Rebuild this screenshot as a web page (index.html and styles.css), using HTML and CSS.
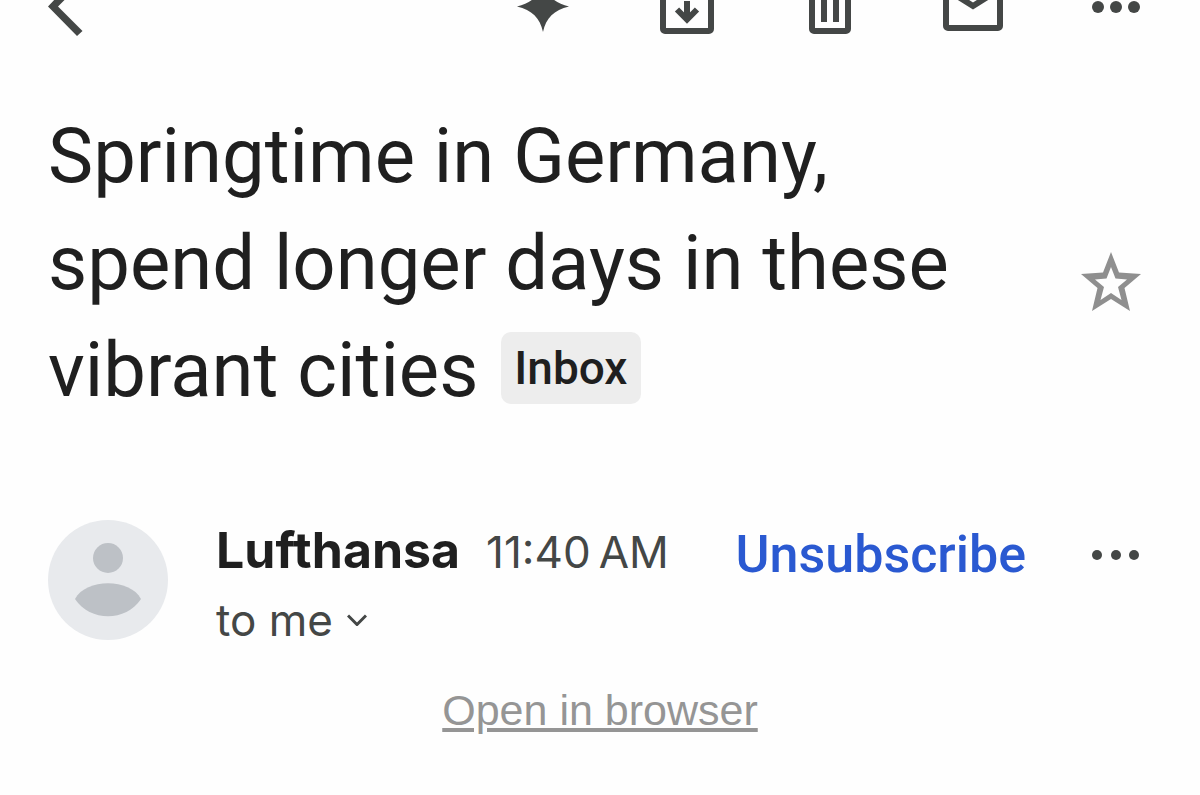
FILE: index.html
```html
<!DOCTYPE html>
<html lang="en">
<head>
  <meta charset="UTF-8">
  <meta name="viewport" content="width=device-width, initial-scale=1">
  <title>Springtime in Germany</title>
  <link rel="stylesheet" href="styles.css">
</head>
<body>

<header class="toolbar">
  <button class="icon-btn back" aria-label="Back">
    <svg viewBox="0 0 60 60"><path d="M28 -3 0 26.500 29 56 34.500 51 10 26.500 34.500 2z"/></svg>
  </button>
  <button class="icon-btn" aria-label="Summarize">
    <svg viewBox="0 0 60 60"><path d="M29 1C32 15 40 23 55 26.500 40 30 32 38 29 52 26 38 18 30 3 26.500 18 23 26 15 29 1z"/></svg>
  </button>
  <button class="icon-btn" aria-label="Archive">
    <svg viewBox="0 0 60 60"><path class="line" d="M6 8 11 3H49L54 8V49a2 2 0 0 1-2 2H8a2 2 0 0 1-2-2zM30 21V38"/><path class="line" d="M20 29.500 30 39.500 40 29.500"/></svg>
  </button>
  <button class="icon-btn" aria-label="Delete">
    <svg viewBox="0 0 60 60"><path class="line" d="M12 9V49a2 2 0 0 0 2 2H46a2 2 0 0 0 2-2V9M24 16V42M36 16V42M7 6H53"/></svg>
  </button>
  <button class="icon-btn" aria-label="Mark unread">
    <svg viewBox="0 0 60 60"><rect class="line" x="3" y="6" width="54" height="42" rx="2"/><path class="line" d="M3 9 30 26 57 9"/></svg>
  </button>
  <button class="icon-btn" aria-label="More options">
    <svg viewBox="0 0 60 60"><circle cx="12" cy="27" r="6"/><circle cx="30" cy="27" r="6"/><circle cx="48" cy="27" r="6"/></svg>
  </button>
</header>

<main>
  <div class="subject">
    <h1>Springtime in Germany, spend longer days in these vibrant cities <span class="label">Inbox</span></h1>
    <button class="icon-btn star" aria-label="Star">
      <svg viewBox="0 0 60 60"><path d="M30 0 38 20.500 60 22 43.500 36 49 59 30 47 11 59 16.500 36 0 22 22 20.500zM30 15 25.500 26.500 14 27.500 23 35 19.500 48 30 41 40.500 48 37 35 46 27.500 34.500 26.500z" fill-rule="evenodd"/></svg>
    </button>
  </div>

  <div class="sender">
    <svg class="avatar" viewBox="0 0 120 120" aria-hidden="true">
      <circle class="avatar-bg" cx="60" cy="60" r="60"/>
      <circle cx="60" cy="38" r="15"/>
      <path d="M27 79C38 58 82 58 93 79 78 102 42 102 27 79z"/>
    </svg>
    <div class="details">
      <div class="from"><strong>Lufthansa</strong> <time>11:40&#8239;AM</time></div>
      <button class="recipients">to me <svg viewBox="0 0 20 12"><path d="M1 1.500 10 10.500 19 1.500"/></svg></button>
    </div>
    <a class="unsubscribe" href="#">Unsubscribe</a>
    <button class="icon-btn" aria-label="Message options">
      <svg viewBox="0 0 60 60"><circle cx="11" cy="30" r="5"/><circle cx="30" cy="30" r="5"/><circle cx="48" cy="30" r="5"/></svg>
    </button>
  </div>

  <p class="browser"><a href="#">Open in browser</a></p>
</main>

</body>
</html>
```
FILE: styles.css
```css
* {
  box-sizing: border-box;
}
body {
  margin: 0;
  background: #fefefe;
  color: #1f1f1f;
  font-family: Roboto, sans-serif;
}
button {
  padding: 0;
  border: none;
  background: none;
  color: inherit;
  font: inherit;
  cursor: pointer;
}
.icon-btn {
  flex: none;
  width: 60px;
  height: 60px;
  color: #444746;
}
.icon-btn svg {
  display: block;
  width: 100%;
  height: 100%;
  overflow: visible;
  fill: currentColor;
}
.icon-btn .line {
  fill: none;
  stroke: currentColor;
  stroke-width: 6;
}

/* scrolled partly off the top */
.toolbar {
  display: flex;
  align-items: flex-end;
  gap: 83px;
  height: 40px;
  padding: 0 54px 0 48px;
}
.toolbar .back {
  margin-right: auto;
}

.subject {
  display: flex;
  align-items: center;
  justify-content: space-between;
  margin-top: 63px;
  padding: 0 59px 0 48px;
}
.subject h1 {
  max-width: 960px;
  margin: 0;
  font-size: 76px;
  font-weight: 400;
  line-height: 107px;
}
.label {
  display: inline-block;
  margin-left: 4px;
  padding: 0 13px;
  border-radius: 10px;
  background: #ededed;
  font-size: 46px;
  font-weight: 500;
  line-height: 72px;
  vertical-align: 12px;
}
.subject .star {
  margin-top: 36px;
  color: #8f8f8f;
}

.sender {
  display: flex;
  align-items: flex-start;
  margin-top: 96px;
  padding: 0 54px 0 48px;
}
.avatar {
  flex: none;
  width: 120px;
  height: 120px;
  margin-right: 48px;
  fill: #bdc1c6;
}
.avatar-bg {
  fill: #e8eaed;
}
.details {
  flex: 1;
  font-family: Inter, sans-serif;
  color: #444746;
}
.from {
  display: flex;
  align-items: baseline;
  gap: 26px;
  line-height: 60px;
}
.from strong {
  color: #1f1f1f;
  font-size: 50px;
  font-weight: 700;
}
.from time {
  font-size: 44px;
}
.recipients {
  display: flex;
  align-items: center;
  gap: 14px;
  font-size: 44px;
  line-height: 76px;
}
.recipients svg {
  width: 20px;
  height: 12px;
  fill: none;
  stroke: currentColor;
  stroke-width: 3;
}
.unsubscribe {
  margin-right: 60px;
  color: #2a59d1;
  font-size: 52px;
  font-weight: 500;
  line-height: 70px;
  text-decoration: none;
}
.sender .icon-btn {
  height: 70px;
}

.browser {
  margin: 22px 0 0;
  font-family: "Liberation Sans", Arial, sans-serif;
  font-size: 43px;
  line-height: 60px;
  text-align: center;
}
.browser a {
  color: #959595;
}
```
